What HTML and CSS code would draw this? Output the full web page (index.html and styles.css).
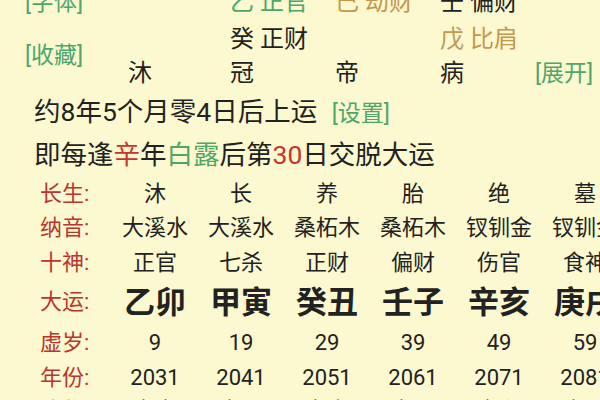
FILE: index.html
```html
<!DOCTYPE html>
<html lang="zh">
<head>
<meta charset="utf-8">
<link rel="stylesheet" href="styles.css">
</head>
<body>
<div class="page">
  <div class="top">
    <div class="link c1 r1">[字体]</div>
    <div class="link c1 r23">[收藏]</div>
    <div class="cell green c3 r1">乙 正官</div>
    <div class="cell gold c4 r1">己 劫财</div>
    <div class="cell c5 r1">壬 偏财</div>
    <div class="cell c3 r2">癸 正财</div>
    <div class="cell gold c5 r2">戊 比肩</div>
    <div class="cell c2 r3">沐</div>
    <div class="cell c3 r3">冠</div>
    <div class="cell c4 r3">帝</div>
    <div class="cell c5 r3">病</div>
    <div class="link c6 r3">[展开]</div>
  </div>
  <div class="info">
    <div class="line">约8年5个月零4日后上运 <span class="link-inline">[设置]</span></div>
    <div class="line">即每逢<span class="red">辛</span>年<span class="greent">白露</span>后第<span class="red">30</span>日交脱大运</div>
  </div>
  <div class="table">
    <div class="lbl">长生:</div>
    <div class="v">沐</div><div class="v">长</div><div class="v">养</div><div class="v">胎</div><div class="v">绝</div><div class="v">墓</div>
    <div class="lbl">纳音:</div>
    <div class="v">大溪水</div><div class="v">大溪水</div><div class="v">桑柘木</div><div class="v">桑柘木</div><div class="v">钗钏金</div><div class="v">钗钏金</div>
    <div class="lbl">十神:</div>
    <div class="v">正官</div><div class="v">七杀</div><div class="v">正财</div><div class="v">偏财</div><div class="v">伤官</div><div class="v">食神</div>
    <div class="lbl">大运:</div>
    <div class="v big">乙卯</div><div class="v big">甲寅</div><div class="v big">癸丑</div><div class="v big">壬子</div><div class="v big">辛亥</div><div class="v big">庚戌</div>
    <div class="lbl">虚岁:</div>
    <div class="v">9</div><div class="v">19</div><div class="v">29</div><div class="v">39</div><div class="v">49</div><div class="v">59</div>
    <div class="lbl">年份:</div>
    <div class="v">2031</div><div class="v">2041</div><div class="v">2051</div><div class="v">2061</div><div class="v">2071</div><div class="v">2081</div>
    <div class="lbl">流年:</div>
    <div class="v">辛亥</div><div class="v">辛酉</div><div class="v">辛未</div><div class="v">辛巳</div><div class="v">辛卯</div><div class="v">辛丑</div>
  </div>
</div>
</body>
</html>
```

FILE: styles.css
```css
html, body {
  margin: 0;
  padding: 0;
  background: #fcf8d0;
  overflow: hidden;
}
body {
  width: 600px;
  height: 400px;
  font-family: Roboto, "Noto Sans CJK SC", sans-serif;
  color: #222;
}
.page {
  position: relative;
}
.top {
  display: grid;
  grid-template-columns: 103px 102px 105px 105px 95px 80px;
  grid-template-rows: 38px 36px 32px;
  margin-top: -17px;
  padding-left: 25px;
  font-size: 24px;
  align-items: center;
}
.c1 { grid-column: 1; }
.c2 { grid-column: 2; }
.c3 { grid-column: 3; }
.c4 { grid-column: 4; }
.c5 { grid-column: 5; }
.c6 { grid-column: 6; }
.r1 { grid-row: 1; }
.r2 { grid-row: 2; }
.r3 { grid-row: 3; }
.r23 { grid-row: 2 / 4; }
.cell {
  white-space: nowrap;
  line-height: 1;
}
.link {
  color: #4fa66b;
  font-size: 23px;
  line-height: 1;
  white-space: nowrap;
}
.green { color: #4ea768; }
.gold { color: #c4974f; }
.info {
  padding-left: 34px;
  margin-top: 1px;
  font-size: 26.5px;
}
.line {
  height: 43px;
  line-height: 43px;
  white-space: nowrap;
}
.link-inline {
  color: #4fa66b;
  font-size: 23px;
  margin-left: 8px;
}
.red { color: #c6342b; }
.greent { color: #4ea768; }
.table {
  display: grid;
  grid-template-columns: 72px repeat(6, 86px);
  grid-template-rows: 35px 34px 35px 44px 38px 32px 33px;
  padding-left: 40px;
  align-items: center;
  font-size: 22px;
  white-space: nowrap;
}
.lbl {
  color: #b9352f;
  line-height: 1;
}
.v {
  text-align: center;
  line-height: 1;
}
.big {
  font-size: 31px;
  font-weight: bold;
}
```
